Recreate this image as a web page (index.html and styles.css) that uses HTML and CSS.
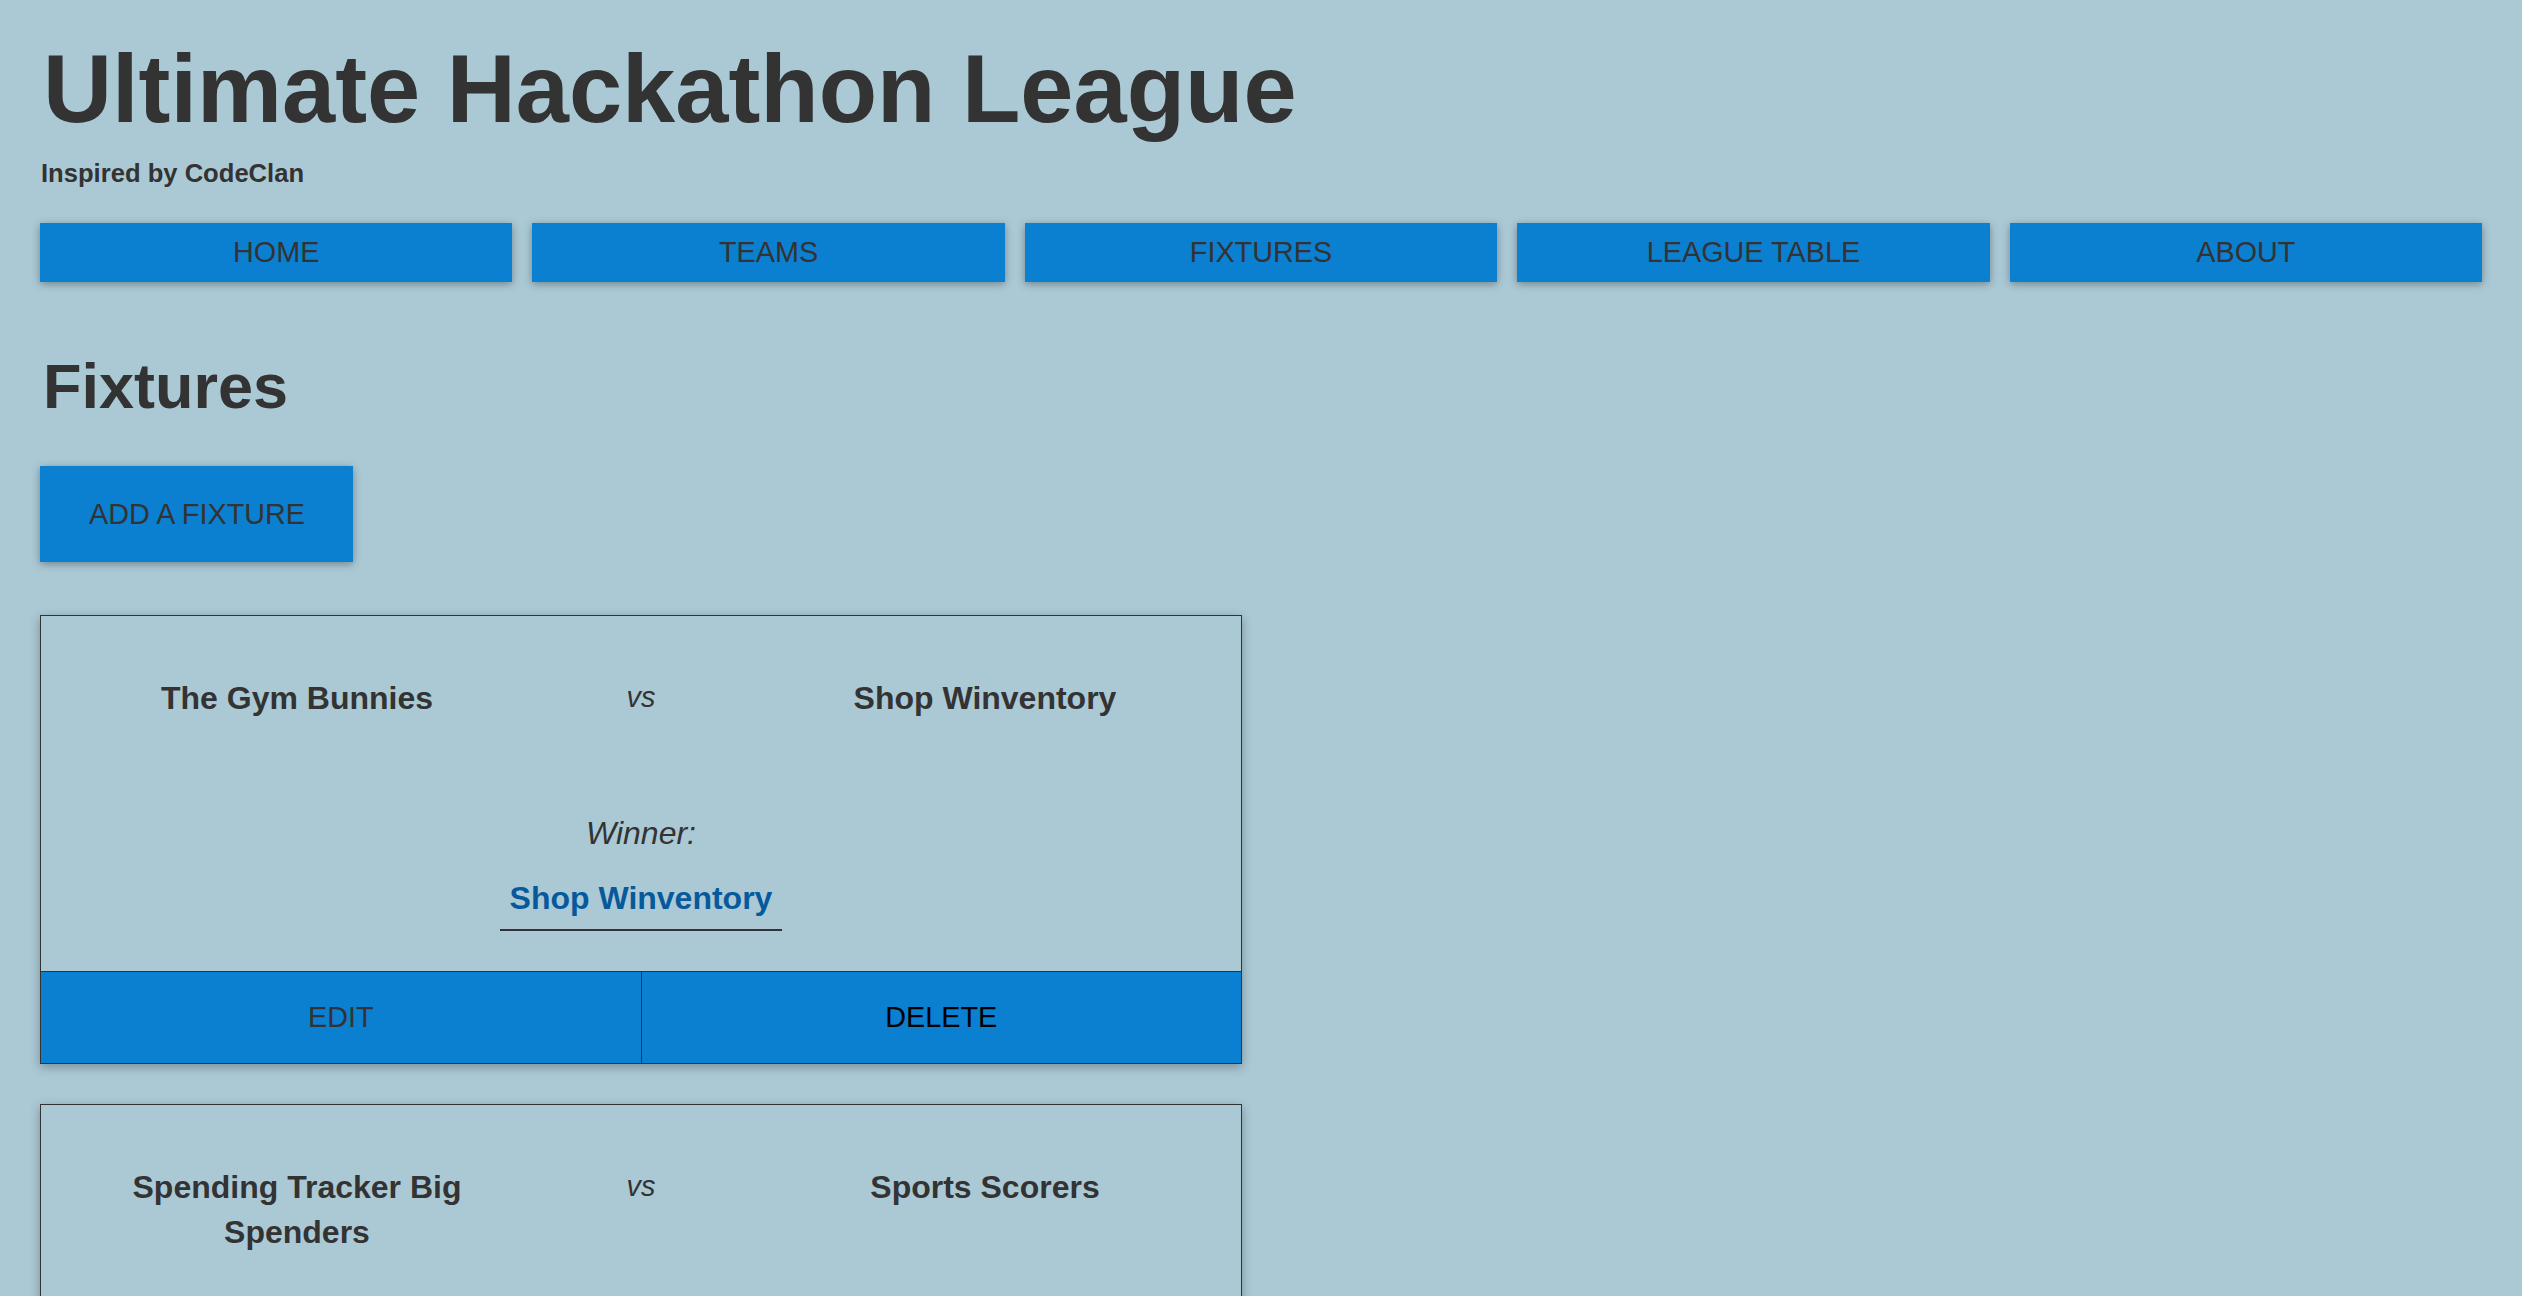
FILE: index.html
```html
<!DOCTYPE html>
<html lang="en">
<head>
<meta charset="utf-8">
<title>Ultimate Hackathon League</title>
<link rel="stylesheet" href="styles.css">
</head>
<body>
<div class="page">
  <header class="site-header">
    <h1 class="site-title">Ultimate Hackathon League</h1>
    <p class="site-subtitle">Inspired by CodeClan</p>
    <nav class="main-nav">
      <a class="nav-btn" href="#">HOME</a>
      <a class="nav-btn" href="#">TEAMS</a>
      <a class="nav-btn" href="#">FIXTURES</a>
      <a class="nav-btn" href="#">LEAGUE TABLE</a>
      <a class="nav-btn" href="#">ABOUT</a>
    </nav>
  </header>

  <main class="content">
    <h2 class="page-title">Fixtures</h2>
    <a class="add-btn" href="#">ADD A FIXTURE</a>

    <section class="fixture-list">
      <article class="fixture-card">
        <div class="fixture-body">
          <div class="teams-row">
            <div class="team">The Gym Bunnies</div>
            <div class="vs">vs</div>
            <div class="team">Shop Winventory</div>
          </div>
          <div class="winner">
            <div class="winner-label">Winner:</div>
            <div class="winner-team">Shop Winventory</div>
          </div>
        </div>
        <div class="fixture-actions">
          <a class="action-btn edit" href="#">EDIT</a>
          <a class="action-btn delete" href="#">DELETE</a>
        </div>
      </article>

      <article class="fixture-card">
        <div class="fixture-body">
          <div class="teams-row">
            <div class="team">Spending Tracker Big Spenders</div>
            <div class="vs">vs</div>
            <div class="team">Sports Scorers</div>
          </div>
          <div class="winner">
            <div class="winner-label">Winner:</div>
          </div>
        </div>
        <div class="fixture-actions">
          <a class="action-btn edit" href="#">EDIT</a>
          <a class="action-btn delete" href="#">DELETE</a>
        </div>
      </article>
    </section>
  </main>
</div>
</body>
</html>
```

FILE: styles.css
```css
* {
  box-sizing: border-box;
}

html, body {
  margin: 0;
  padding: 0;
  background: #abc9d5;
}

body {
  font-family: "Liberation Sans", Arial, sans-serif;
  color: #333333;
}

a {
  text-decoration: none;
}

.page {
  padding: 34px 40px 40px 40px;
}

.site-title {
  margin: 0 0 0 3px;
  font-size: 95.6px;
  line-height: 110px;
  font-weight: bold;
  color: #333333;
}

.site-subtitle {
  margin: 14px 0 0 1px;
  font-size: 25.6px;
  line-height: 30px;
  font-weight: bold;
}

.main-nav {
  margin-top: 35px;
  display: flex;
  gap: 20px;
}

.nav-btn {
  flex: 1 1 0;
  display: block;
  background: #0b7fd0;
  color: #333333;
  text-align: center;
  font-size: 28.8px;
  line-height: 33px;
  padding: 13px 0;
  box-shadow: 0 2px 8px rgba(0, 0, 0, 0.35);
}

.page-title {
  margin: 68px 0 0 3px;
  font-size: 63px;
  line-height: 72px;
  font-weight: bold;
}

.add-btn {
  display: inline-block;
  margin-top: 44px;
  background: #0b7fd0;
  color: #333333;
  font-size: 28.8px;
  line-height: 34px;
  padding: 31px 48px 31px 49px;
  box-shadow: 0 2px 8px rgba(0, 0, 0, 0.35);
}

.fixture-list {
  margin-top: 53px;
  display: flex;
  flex-direction: column;
  gap: 40px;
}

.fixture-card {
  width: 1202px;
  border: 1px solid #333333;
  box-shadow: 0 3px 10px rgba(0, 0, 0, 0.3);
}

.fixture-body {
  padding: 60px 0 40px 0;
  text-align: center;
}

.teams-row {
  display: grid;
  grid-template-columns: 1fr 176px 1fr;
  align-items: start;
}

.team {
  font-size: 32px;
  line-height: 1.4;
  font-weight: bold;
  padding: 0 40px;
}

.vs {
  font-size: 28.8px;
  line-height: 1.4;
  font-style: italic;
  padding-top: 1px;
}

.winner {
  margin-top: 90px;
  display: flex;
  flex-direction: column;
  align-items: center;
}

.winner-label {
  font-size: 32px;
  line-height: 1.4;
  font-style: italic;
}

.winner-team {
  margin-top: 20px;
  font-size: 32px;
  line-height: 1.4;
  font-weight: bold;
  color: #065a9c;
  padding: 0 10px 9px 10px;
  border-bottom: 2px solid #333333;
}

.fixture-actions {
  display: flex;
  border-top: 1px solid #333333;
}

.action-btn {
  flex: 1 1 0;
  display: block;
  background: #0b7fd0;
  text-align: center;
  font-size: 28.8px;
  line-height: 33px;
  padding: 29px 0 29px 0;
}

.action-btn.edit {
  color: #333333;
  border-right: 1px solid #333333;
}

.action-btn.delete {
  color: #000000;
}
```
